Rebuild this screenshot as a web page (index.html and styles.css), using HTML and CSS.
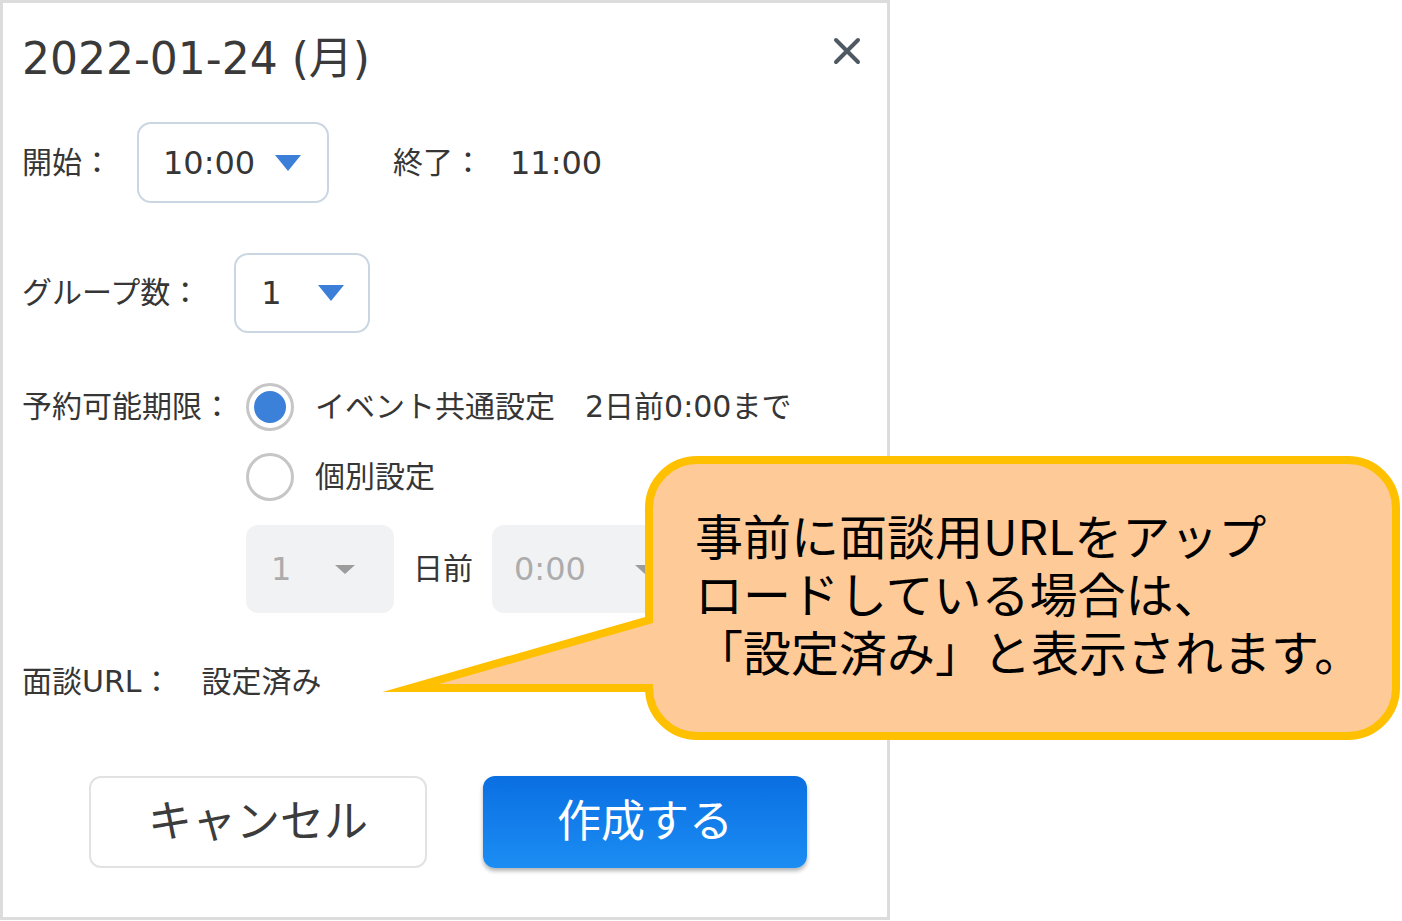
FILE: index.html
```html
<!DOCTYPE html>
<html lang="ja">
<head>
    <meta charset="UTF-8">
    <title>予約枠の作成</title>
    <link rel="stylesheet" href="styles.css">
</head>
<body>

<div class="dialog">
    <div class="dlg-head">
        <h1 class="dlg-title">2022-01-24 (月)</h1>
        <button class="close" aria-label="閉じる">
            <svg width="28" height="28" viewBox="0 0 28 28"><path d="M3 3 L25 25 M25 3 L3 25" stroke="#4e5963" stroke-width="4" stroke-linecap="round"/></svg>
        </button>
    </div>

    <div class="row row-time">
        <span class="label">開始：</span>
        <div class="select sel-start"><span class="val">10:00</span><span class="caret"></span></div>
        <span class="label end-label">終了：</span>
        <span class="val end-val">11:00</span>
    </div>

    <div class="row row-group">
        <span class="label">グループ数：</span>
        <div class="select sel-group"><span class="val">1</span><span class="caret"></span></div>
    </div>

    <div class="row row-radio">
        <span class="label label-wide">予約可能期限：</span>
        <span class="radio checked"></span>
        <span class="radio-text">イベント共通設定</span>
        <span class="radio-note">2日前0:00まで</span>
    </div>

    <div class="row row-radio row-second indent">
        <span class="radio"></span>
        <span class="radio-text">個別設定</span>
    </div>

    <div class="row row-custom indent">
        <div class="select disabled sel-day"><span class="val">1</span><span class="caret small"></span></div>
        <span class="label">日前</span>
        <div class="select disabled sel-hour"><span class="val">0:00</span><span class="caret small"></span></div>
    </div>

    <div class="row row-url">
        <span class="label">面談URL：</span>
        <span class="url-state">設定済み</span>
    </div>

    <div class="actions">
        <button class="btn btn-cancel">キャンセル</button>
        <button class="btn btn-create">作成する</button>
    </div>
</div>

<!-- annotation balloon over the dialog -->
<div class="callout">
    <svg class="callout-shape" width="1032" height="300" viewBox="370 450 1032 300">
        <path d="M697 460 H1348 A48 48 0 0 1 1396 508 V688 A48 48 0 0 1 1348 736 H697 A48 48 0 0 1 649 688 L411 688 L649 620 V508 A48 48 0 0 1 697 460 Z"
              fill="#fdca98" stroke="#ffc000" stroke-width="8" stroke-linejoin="miter" stroke-miterlimit="12"/>
    </svg>
    <p class="callout-text">事前に面談用URLをアップ<br>ロードしている場合は、<br>「設定済み」と表示されます。</p>
</div>

</body>
</html>
```

FILE: styles.css
```css
body {
    margin: 0;
    background: #fff;
    font-family: "DejaVu Sans", "Noto Sans CJK JP", sans-serif;
    color: #363636;
    position: relative;
    width: 1402px;
    height: 921px;
    overflow: hidden;
}

.dialog {
    width: 890px;
    height: 920px;
    box-sizing: border-box;
    border: 3px solid #dcdcdc;
    padding: 0 26px 0 19px;
    background: #fff;
}

.dlg-head {
    height: 108px;
    display: flex;
    align-items: center;
    justify-content: space-between;
}
.dlg-title {
    margin: 0;
    font-size: 44px;
    font-weight: normal;
    line-height: 1;
    color: #3a3a3a;
    position: relative;
    top: 2px;
}
.close {
    border: none;
    background: none;
    padding: 0;
    width: 28px;
    height: 28px;
    position: relative;
    top: -6px;
    cursor: pointer;
}
.close svg { display: block; }

/* form rows */
.row {
    display: flex;
    align-items: center;
    font-size: 30px;
}
.label { white-space: nowrap; }
.label, .radio-text, .radio-note, .url-state {
    position: relative;
    top: -3px;
}
.val { font-size: 32px; }

.row-time { margin-top: 11px; height: 81px; }
.row-group { margin-top: 50px; height: 80px; }
.row-radio { margin-top: 50px; height: 48px; }
.row-second { margin-top: 22px; }
.row-custom { margin-top: 24px; height: 88px; gap: 19px; }
.row-url { margin-top: 49px; height: 40px; }
.indent { padding-left: 224px; }

.select {
    display: flex;
    align-items: center;
    justify-content: space-between;
    height: 100%;
    box-sizing: border-box;
    border: 2px solid #cad6e2;
    border-radius: 14px;
    background: #fff;
}
.sel-start {
    width: 192px;
    margin-left: 25px;
    padding: 0 26px 0 24px;
}
.sel-group {
    width: 136px;
    margin-left: 34px;
    padding: 0 24px 0 25px;
}
.caret {
    width: 0;
    height: 0;
    border-left: 13px solid transparent;
    border-right: 13px solid transparent;
    border-top: 16px solid #3b7fd8;
}
.caret.small {
    border-left-width: 10px;
    border-right-width: 10px;
    border-top: 9px solid #9c9c9c;
}

.end-label { margin-left: 64px; }
.end-val { margin-left: 27px; }

.select.disabled {
    border: none;
    border-radius: 12px;
    background: #f1f2f4;
    color: #acacac;
}
.sel-day {
    width: 148px;
    padding: 0 39px 0 25px;
}
.sel-hour {
    width: 202px;
    padding: 0 39px 0 22px;
}

.label-wide { width: 224px; }
.radio {
    width: 48px;
    height: 48px;
    box-sizing: border-box;
    border: 3px solid #c6c6c6;
    border-radius: 50%;
    display: flex;
    align-items: center;
    justify-content: center;
    flex: none;
}
.radio.checked::after {
    content: "";
    width: 32px;
    height: 32px;
    border-radius: 50%;
    background: #3b80d9;
}
.radio-text { margin-left: 21px; }
.radio-note { margin-left: 30px; }

.url-state { margin-left: 30px; }

/* buttons */
.actions {
    margin-top: 74px;
    padding-left: 67px;
    display: flex;
    gap: 56px;
}
.btn {
    height: 92px;
    padding: 0 0 8px;
    border-radius: 12px;
    font-family: "DejaVu Sans", "Noto Sans CJK JP", sans-serif;
    font-size: 44px;
    cursor: pointer;
}
.btn-cancel {
    width: 338px;
    background: #fff;
    border: 2px solid #e2e2e2;
    color: #3c3c3c;
}
.btn-create {
    width: 324px;
    border: none;
    background: linear-gradient(#0a6fe2, #1c8df3);
    color: #fff;
    box-shadow: 0 3px 4px rgba(0, 0, 0, 0.3);
}

/* balloon */
.callout {
    position: absolute;
    left: 370px;
    top: 450px;
    width: 1032px;
    height: 300px;
}
.callout-shape {
    display: block;
}
.callout-text {
    position: absolute;
    left: 325px;
    top: 55px;
    margin: 0;
    font-family: "Noto Sans CJK JP", sans-serif;
    font-size: 48px;
    line-height: 58px;
    color: #000;
    white-space: nowrap;
}
```
